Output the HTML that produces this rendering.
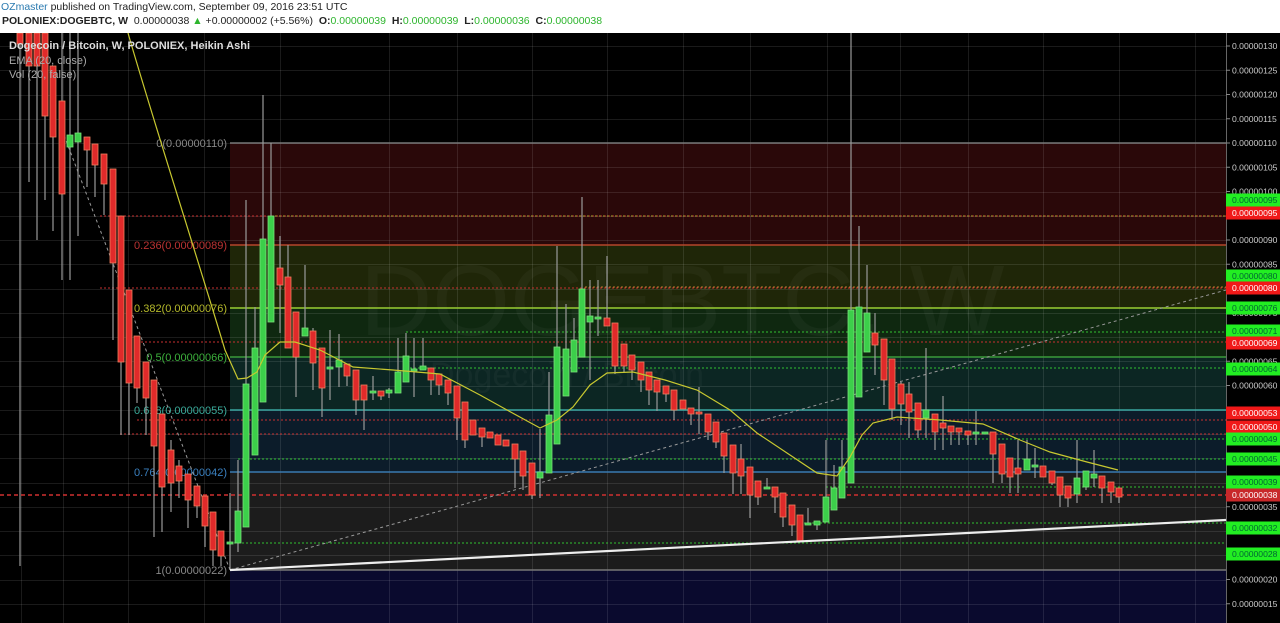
<!DOCTYPE html>
<html><head><meta charset="utf-8"><style>
html,body{margin:0;padding:0;width:1280px;height:623px;overflow:hidden;background:#fff;font-family:"Liberation Sans",sans-serif}
#hdr{position:absolute;left:0;top:0;width:1280px;height:33px;background:#fff;font-size:10.5px;color:#222}
#hdr .l1{position:absolute;left:1px;top:1px}
#hdr .l2{position:absolute;left:2px;top:15px}
.g{color:#2db52d}
svg{position:absolute;left:0;top:33px}
</style></head><body>
<div id="hdr">
<div class="l1"><span style="color:#2a7ab0">OZmaster</span> published on TradingView.com, September 09, 2016 23:51 UTC</div>
<div class="l2"><b>POLONIEX:DOGEBTC, W</b>&nbsp; 0.00000038 <span class="g">▲</span> +0.00000002 (+5.56%) &nbsp;<b>O:</b><span class="g">0.00000039</span> &nbsp;<b>H:</b><span class="g">0.00000039</span> &nbsp;<b>L:</b><span class="g">0.00000036</span> &nbsp;<b>C:</b><span class="g">0.00000038</span></div>
</div>
<svg id="c" width="1280" height="590" viewBox="0 33 1280 590" xmlns="http://www.w3.org/2000/svg" font-family="Liberation Sans, sans-serif">
<rect x="0" y="33" width="1280" height="590" fill="#000"/>
<rect x="230" y="143" width="996" height="102" fill="#2a0809"/>
<rect x="230" y="245" width="996" height="63" fill="#1f2608"/>
<rect x="230" y="308" width="996" height="49" fill="#0f2810"/>
<rect x="230" y="357" width="996" height="53" fill="#0c2623"/>
<rect x="230" y="410" width="996" height="62" fill="#0c1c2a"/>
<rect x="230" y="472" width="996" height="98" fill="#1c1c1c"/>
<rect x="230" y="570" width="996" height="53" fill="#0a0a2e"/>
<text x="360" y="335" font-size="100" fill="#fff" fill-opacity="0.035">DOGEBTC, W</text>
<text x="430" y="386" font-size="34" fill="#fff" fill-opacity="0.035">Dogecoin / Bitcoin</text>
<g id="grid" stroke="#fff" stroke-opacity="0.1" stroke-width="1"></g>
<g stroke-width="1.5">
<line x1="230" y1="143" x2="1226" y2="143" stroke="#777"/>
<line x1="230" y1="245" x2="1226" y2="245" stroke="#b5462a"/>
<line x1="230" y1="308" x2="1226" y2="308" stroke="#9acd32"/>
<line x1="230" y1="357" x2="1226" y2="357" stroke="#3a9a3a"/>
<line x1="230" y1="410" x2="1226" y2="410" stroke="#3aa6a0"/>
<line x1="230" y1="472" x2="1226" y2="472" stroke="#3a7ab0"/>
<line x1="230" y1="570" x2="1226" y2="570" stroke="#777"/>
</g>
<g font-size="11" text-anchor="end">
<text x="227" y="147" fill="#888">0(0.00000110)</text>
<text x="227" y="249" fill="#b33">0.236(0.00000089)</text>
<text x="227" y="312" fill="#b4b82a">0.382(0.00000076)</text>
<text x="227" y="361" fill="#3cb03c">0.5(0.00000066)</text>
<text x="227" y="414" fill="#3aaa9a">0.618(0.00000055)</text>
<text x="227" y="476" fill="#3a80c0">0.764(0.00000042)</text>
<text x="227" y="574" fill="#888">1(0.00000022)</text>
</g>
<g stroke-dasharray="2,2" stroke-width="1">
<line x1="100" y1="216" x2="1226" y2="216" stroke="#c83030"/>
<line x1="271" y1="216" x2="1226" y2="216" stroke="#b0a030"/>
<line x1="100" y1="288" x2="1226" y2="288" stroke="#c83030"/>
<line x1="585" y1="287" x2="1226" y2="287" stroke="#b08030"/>
<line x1="406" y1="332" x2="1226" y2="332" stroke="#30c030"/>
<line x1="137" y1="342" x2="1226" y2="342" stroke="#c83030"/>
<line x1="406" y1="368" x2="1226" y2="368" stroke="#30c030"/>
<line x1="137" y1="420" x2="1226" y2="420" stroke="#c83030"/>
<line x1="120" y1="434" x2="1226" y2="434" stroke="#c83030"/>
<line x1="826" y1="439" x2="1226" y2="439" stroke="#30c030"/>
<line x1="238" y1="459" x2="1226" y2="459" stroke="#30c030"/>
<line x1="826" y1="487" x2="1226" y2="487" stroke="#30c030"/>
<line x1="800" y1="523" x2="1226" y2="523" stroke="#30c030"/>
<line x1="230" y1="543" x2="1226" y2="543" stroke="#30c030"/>
</g>
<line x1="0" y1="495" x2="1226" y2="495" stroke="#d03030" stroke-width="1.5" stroke-dasharray="4,3"/>
<line x1="230" y1="570" x2="1226" y2="290" stroke="#999" stroke-dasharray="3,3"/>
<line x1="62" y1="130" x2="230" y2="570" stroke="#999" stroke-dasharray="3,3"/>
<g id="cd"></g>
<path d="M128,33 C150,110 195,250 225,350 L238,379 L247,378 L257,372 L265,355 L280,342 L295,342 L320,350 L353,367 L393,370 L440,374 L480,395 L507,410 L540,428 L557,420 L573,407 L590,385 L607,373 L633,372 L665,380 L697,390 L730,410 L757,433 L790,455 L817,473 L837,476 L850,457 L862,435 L873,423 L897,417 L940,420 L983,424 L1020,440 L1050,452 L1087,462 L1118,470" fill="none" stroke="#c8c830" stroke-width="1.2"/>
<line x1="230" y1="570" x2="1226" y2="520" stroke="#eee" stroke-width="2.2"/>
<rect x="1226" y="33" width="54" height="590" fill="#000"/>
<line x1="1226.5" y1="33" x2="1226.5" y2="623" stroke="#666"/>
<g id="ax" font-size="8.6" fill="#ccc"></g>
<text x="9" y="49" font-size="11" font-weight="bold" fill="#ddd">Dogecoin / Bitcoin, W, POLONIEX, Heikin Ashi</text>
<text x="9" y="64" font-size="11" fill="#aaa">EMA (20, close)</text>
<text x="9" y="78" font-size="11" fill="#aaa">Vol (20, false)</text>
</svg>
<script>
var NS="http://www.w3.org/2000/svg";
function el(p,t,a){var e=document.createElementNS(NS,t);for(var k in a)e.setAttribute(k,a[k]);p.appendChild(e);return e;}
var Y=function(p){return 143+(110-p)*4.85;};
var grid=document.getElementById('grid');
[21,63,128,204,280,389,457,532,607,683,750,827,900,968,1043,1119,1195].forEach(function(x){el(grid,'line',{x1:x+.5,y1:33,x2:x+.5,y2:623});});
for(var p=130;p>=15;p-=5){var y=Math.round(Y(p))+.5;el(grid,'line',{x1:0,y1:y,x2:1226,y2:y});}
var ax=document.getElementById('ax');
[130,125,120,115,110,105,100,90,85,75,65,60,35,20,15].forEach(function(p){var y=Y(p);
el(ax,'line',{x1:1226,y1:y,x2:1230,y2:y,stroke:'#888'});
var t=el(ax,'text',{x:1232,y:y+3.2});t.textContent='0.00000'+(p<100?'0':'')+p;});
var L=[[200,'g','95'],[213,'r','95'],[276,'g','80'],[288,'r','80'],[308,'g','76'],[331,'g','71'],[343,'r','69'],[369,'g','64'],[413,'r','53'],[427,'r','50'],[439,'g','49'],[459,'g','45'],[482,'g','39'],[495,'d','38'],[528,'g','32'],[554,'g','28']];
L.forEach(function(l){var c=l[1]=='g'?'#22ee22':(l[1]=='r'?'#f01818':'#c8282a');
el(ax,'rect',{x:1226,y:l[0]-6.5,width:54,height:13,fill:c});
var t=el(ax,'text',{x:1232,y:l[0]+3.2,fill:l[1]=='g'?'#063':'#fff'});t.textContent='0.000000'+l[2];});
var C=[[20,33,44,33,566,'r'],[29,33,66,33,182,'r'],[37,33,66,33,240,'r'],[45,33,116,33,200,'r'],[53,66,137,66,231,'r'],[62,101,194,33,280,'r'],[70,135,147,33,280,'g'],[78,133,142,33,236,'g'],[87,137,150,137,187,'r'],[95,144,165,144,197,'r'],[104,154,184,154,215,'r'],[113,169,263,169,340,'r'],[121,216,362,216,435,'r'],[129,290,383,290,435,'r'],[137,336,388,336,403,'r'],[146,362,398,362,435,'r'],[154,380,446,380,537,'r'],[162,414,487,414,532,'r'],[171,450,483,440,512,'r'],[179,466,481,460,498,'r'],[188,474,500,474,528,'r'],[197,486,506,486,518,'r'],[205,496,526,496,547,'r'],[213,512,550,512,566,'r'],[221,531,556,531,566,'r'],[230,542,544,493,570,'g'],[238,511,543,460,552,'g'],[246,384,527,200,527,'g'],[255,348,455,307,455,'g'],[263,239,402,95,402,'g'],[271,216,322,143,322,'g'],[280,268,285,236,333,'r'],[288,277,348,245,348,'r'],[296,312,357,312,397,'r'],[305,328,336,265,336,'g'],[313,331,363,328,390,'r'],[322,348,388,348,417,'r'],[330,367,369,330,400,'g'],[339,360,367,334,387,'g'],[347,364,376,364,386,'r'],[356,370,400,370,415,'r'],[364,385,400,385,430,'r'],[373,391,393,376,400,'g'],[381,391,396,391,400,'r'],[389,390,393,388,398,'g'],[398,372,393,338,393,'g'],[406,356,382,333,382,'g'],[414,369,371,338,397,'g'],[423,366,370,338,370,'g'],[431,368,380,368,395,'r'],[439,374,385,374,395,'r'],[448,380,393,380,405,'r'],[457,386,418,386,440,'r'],[465,402,440,402,448,'r'],[473,420,435,420,435,'r'],[482,428,437,428,447,'r'],[490,432,438,432,438,'r'],[498,435,445,435,445,'r'],[506,440,446,440,446,'r'],[515,444,459,444,488,'r'],[523,451,476,451,490,'r'],[532,463,495,463,499,'r'],[540,472,478,429,498,'g'],[549,415,473,372,473,'g'],[557,347,444,246,444,'g'],[566,349,396,304,396,'g'],[574,340,372,318,372,'g'],[582,289,357,197,357,'g'],[590,316,322,280,380,'g'],[598,317,319,280,336,'g'],[607,318,326,256,326,'r'],[615,323,366,323,374,'r'],[624,344,366,344,372,'r'],[632,355,370,355,380,'r'],[641,362,380,362,392,'r'],[649,372,390,372,405,'r'],[657,380,392,380,411,'r'],[666,386,394,386,402,'r'],[674,390,410,390,420,'r'],[683,400,409,400,409,'r'],[691,408,414,408,425,'r'],[699,412,414,387,434,'r'],[708,414,432,414,440,'r'],[716,422,442,422,448,'r'],[724,433,456,433,473,'r'],[733,445,473,445,494,'r'],[741,459,476,444,494,'r'],[750,467,495,467,518,'r'],[758,481,497,481,505,'r'],[767,487,489,478,489,'g'],[775,487,497,487,513,'r'],[783,493,517,493,527,'r'],[792,505,525,505,536,'r'],[800,515,541,515,541,'r'],[808,523,525,508,525,'g'],[817,521,525,521,530,'g'],[826,497,522,440,522,'g'],[834,488,510,465,510,'g'],[842,467,498,440,498,'g'],[851,310,483,33,483,'g'],[859,307,397,226,397,'g'],[867,313,352,265,352,'g'],[875,333,345,313,375,'r'],[884,339,380,339,405,'r'],[892,359,409,359,420,'r'],[901,384,404,382,425,'r'],[909,394,412,382,438,'r'],[918,403,430,403,438,'r'],[926,410,418,348,438,'g'],[935,414,432,414,450,'r'],[943,423,428,396,450,'r'],[951,426,432,426,445,'r'],[959,428,432,428,445,'r'],[968,431,435,431,445,'r'],[976,432,434,411,445,'g'],[985,432,434,432,434,'g'],[993,432,454,432,483,'r'],[1002,444,474,444,483,'r'],[1010,458,477,458,493,'r'],[1018,468,474,440,493,'r'],[1027,459,470,440,470,'g'],[1035,465,467,448,478,'g'],[1043,466,477,466,477,'r'],[1052,471,483,471,485,'r'],[1060,477,495,477,507,'r'],[1068,486,498,486,507,'r'],[1077,478,494,440,503,'g'],[1086,471,487,471,490,'g'],[1094,474,478,450,487,'g'],[1102,476,488,476,503,'r'],[1111,482,492,482,503,'r'],[1119,488,497,488,503,'r']];
var cd=document.getElementById('cd');
C.forEach(function(c){var x=c[0];
el(cd,'line',{x1:x,y1:c[3],x2:x,y2:c[4],stroke:'#9a9a9a','stroke-width':1.2});
var g=c[5]=='g';el(cd,'rect',{x:x-3,y:c[1],width:6,height:Math.max(2,c[2]-c[1]),fill:g?'#3ccf4a':'#e02a2a',stroke:g?'#7ae07a':'#f08060','stroke-width':0.8});});
</script>
</body></html>
